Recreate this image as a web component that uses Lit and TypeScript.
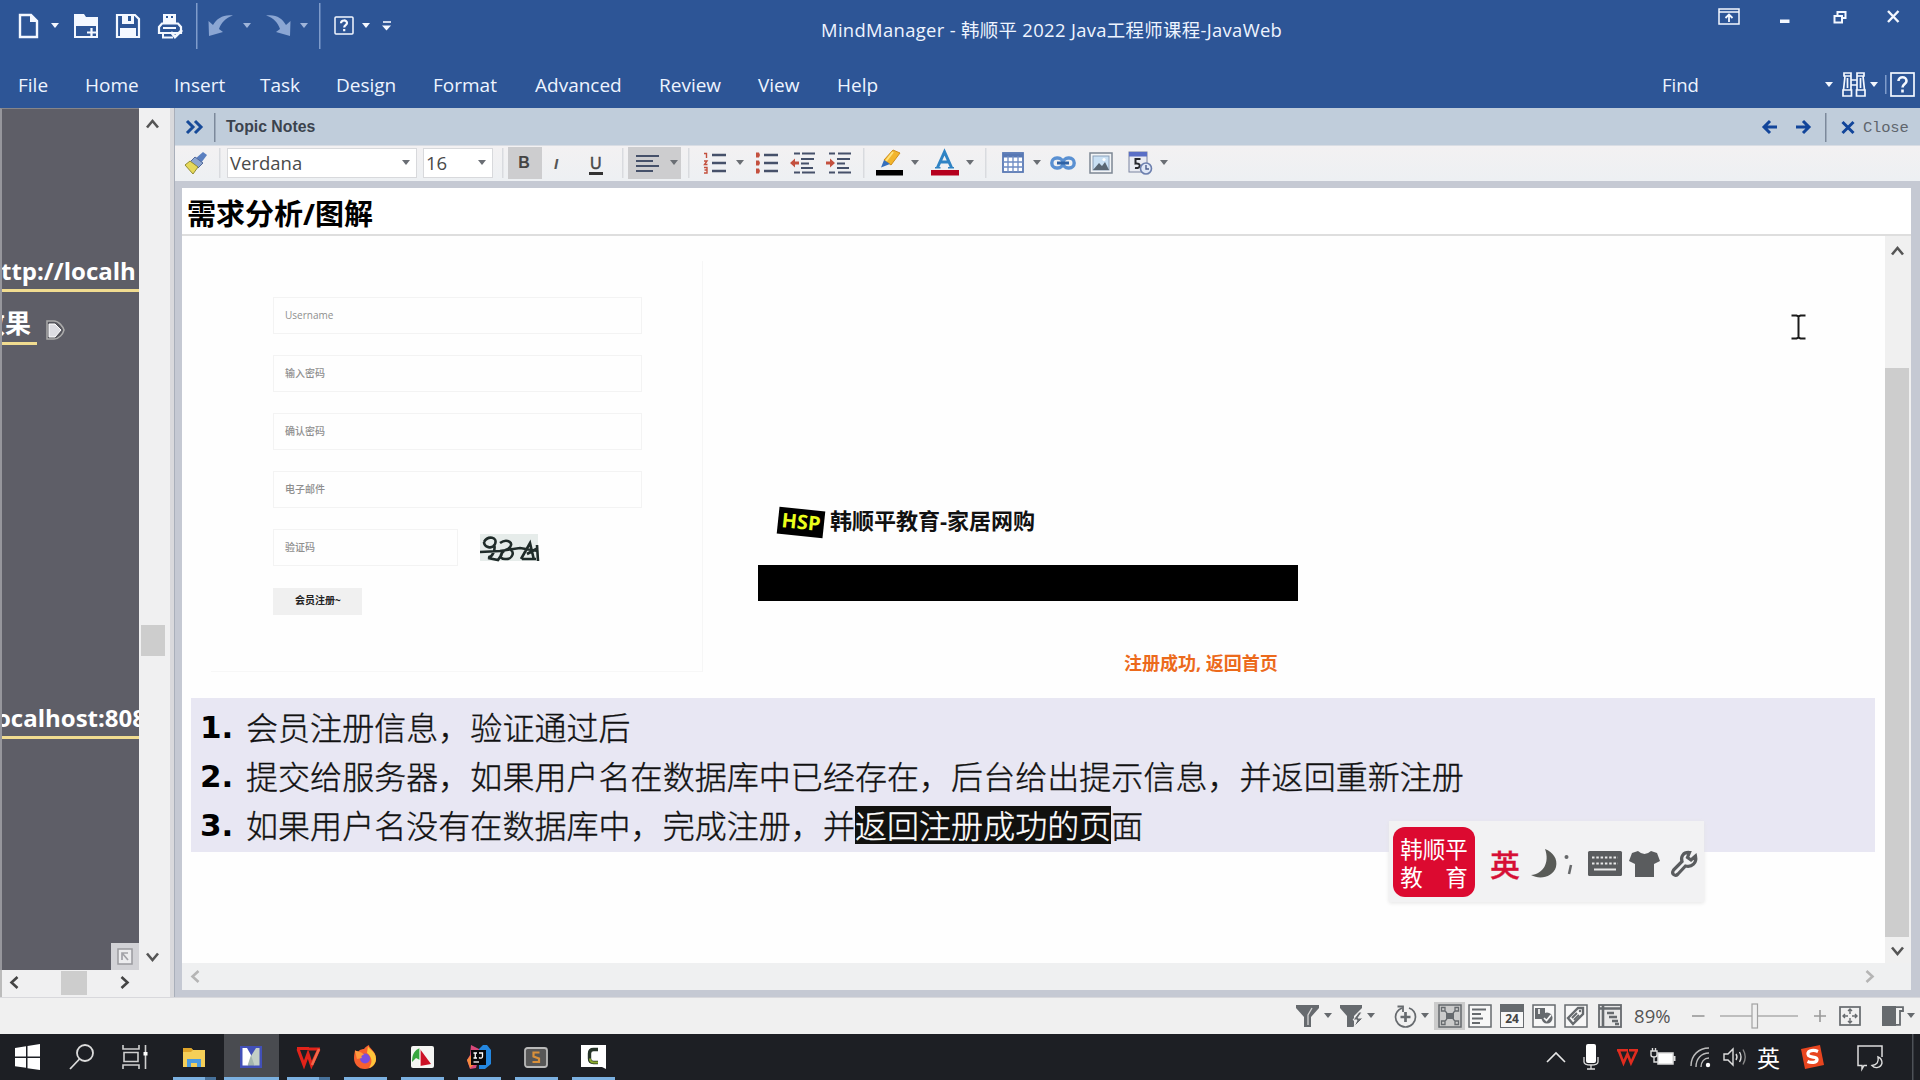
import { LitElement, html, svg, css, unsafeCSS, TemplateResult } from "lit";
import { customElement } from "lit/decorators.js";

/** Grid tracks from the left edge of every item; the last item takes the rest. */
const track = (...lefts: number[]) =>
  unsafeCSS(
    `padding-left:${lefts[0]}px;grid-template-columns:${lefts
      .slice(1)
      .map((x, i) => `${x - lefts[i]}px`)
      .join(" ")} auto`
  );

const icon = (w: number, h: number, body: unknown) =>
  html`<svg class="icon" width=${w} height=${h} viewBox="0 0 ${w} ${h}" fill="none">${body}</svg>`;

const caret = (color: string) => icon(8, 5, svg`<path d="M0 0H8L4 5Z" fill=${color} />`);
const line = (h: number, color: string) => icon(2, h, svg`<rect width="1.5" height=${h} fill=${color} />`);
const chev = (dir: "up" | "down" | "left" | "right", color: string) => {
  const d = { up: "M2 10.500L7.500 4L13 10.500", down: "M2 4.500L7.500 11L13 4.500", left: "M10.500 2L4.500 7.500L10.500 13", right: "M4.500 2L10.500 7.500L4.500 13" }[dir];
  return icon(15, 15, svg`<path d=${d} stroke=${color} stroke-width="2.600" />`);
};

const W = "#f4f8ff";
const G = "#666a6e";

const quick: TemplateResult[] = [
  icon(21, 26, svg`<path d="M2 2H13L19 8V24H2Z" stroke=${W} stroke-width="2.400"/><path d="M12 1V9H20" fill=${W}/>`),
  caret(W),
  icon(26, 26, svg`<path d="M1 1H11L13 4H25V13H1Z" fill=${W}/><path d="M2 10V24H24V10" stroke=${W} stroke-width="2"/><path d="M14 19.500H23M18.500 15V24" stroke=${W} stroke-width="2.200"/>`),
  icon(26, 26, svg`<path d="M2 2H20L24 6V24H2Z" stroke=${W} stroke-width="2.200"/><path d="M7 1H19V11H7Z" fill=${W}/><path d="M13 3H16V8H13Z" fill="#2b5797"/><path d="M5 15H21V24H5Z" fill=${W}/>`),
  icon(26, 26, svg`<path d="M6 1H19V10H6Z" fill=${W}/><path d="M9 3H11V5H9ZM14 3H16V5H14ZM9 7H16" fill="#2b5797"/><path d="M5 10.500H21L24 14V20H2V14Z" stroke=${W} stroke-width="2.200"/><path d="M6 15H19M6 20V24.500H16" stroke=${W} stroke-width="2"/><path d="M14 19L18 24L25 17" stroke=${W} stroke-width="2.800"/>`),
  line(46, "#7f9ccb"),
  icon(26, 23, svg`<path d="M1 22L0.500 7L5 11C9 4 16 0 25 1.500C17.500 4 13 9 11 15L15 18Z" fill="#8ba6d3"/>`),
  caret("#9fb5da"),
  icon(26, 23, svg`<path d="M24 22L24.500 7L20 11C16 4 10 0 0 1.500C8 4 12 9 14 15L10 18Z" fill="#8ba6d3"/>`),
  caret("#9fb5da"),
  line(46, "#7f9ccb"),
  icon(20, 19, svg`<rect x="1" y="1" width="18" height="17" rx="1" stroke=${W} stroke-width="1.500"/><path d="M7 7.200C7 3.600 13 3.600 13 7C13 9.200 10.200 9 10.200 11.500M10.200 13V15.200" stroke=${W} stroke-width="2.200"/>`),
  caret(W),
  icon(9, 10, svg`<path d="M1 1H9" stroke=${W} stroke-width="1.600"/><path d="M0 4.500H9L4.500 9.500Z" fill=${W}/>`),
];

const windowButtons = [
  icon(22, 17, svg`<rect x="1" y="1" width="20" height="15" stroke=${W} stroke-width="1.500"/><path d="M1 4H21" stroke=${W} stroke-width="1.500"/><path d="M11 14V7M7.500 10L11 6.500L14.500 10" stroke=${W} stroke-width="1.800"/>`),
  icon(10, 14, svg`<rect y="9.500" width="9.500" height="3.500" fill=${W}/>`),
  icon(14, 14, svg`<path d="M4.500 5V2H12.500V8H9.500" stroke=${W} stroke-width="2"/><rect x="1.500" y="6" width="7.500" height="6.500" stroke=${W} stroke-width="2"/>`),
  icon(13, 13, svg`<path d="M1 1L11.500 12M11.500 1L1 12" stroke=${W} stroke-width="2.400"/>`),
];

const findTools = [
  html`<span>Find</span>`,
  caret(W),
  icon(24, 25, svg`<path d="M2 1H9V4H2ZM15 1H22V4H15ZM3 4L1.500 18M9 4V18M15 4V18M21 4L22.500 18M1 18H9.500V24H1ZM14.500 18H23V24H14.500ZM9 8H15M9 13H15M5.500 6V16M18.500 6V16" stroke=${W} stroke-width="1.700"/>`),
  caret(W),
  line(19, "#7f9ccb"),
  icon(25, 25, svg`<rect x="1" y="1" width="23" height="23" stroke=${W} stroke-width="1.700"/><path d="M8.500 9C8.500 4 16.500 4 16.500 9C16.500 12 12.500 12 12.500 15.500M12.500 17.500V20.500" stroke=${W} stroke-width="2.600"/>`),
];

const N = "#46516a";
const R = "#c4503e";
const K = "#6a6e74";

const toolbar = [
  icon(24, 24, svg`<path d="M19 1L23 4L17 12L11 8Z" fill="#5a7fc0"/><path d="M11 6L19 12L14 17L6 11Z" fill="#8da6cf" stroke="#53699a"/><path d="M6 10L14 16L9 23L1 14Z" fill="#e6d95a" stroke="#928c35"/>`),
  line(30, "#d9dbdf"),
  html`<div class="select"><span>Verdana</span>${caret(K)}</div>`,
  html`<div class="select size"><span>16</span>${caret(K)}</div>`,
  line(30, "#d9dbdf"),
  html`<div class="on"><b>B</b></div>`,
  html`<i class="ital">I</i>`,
  html`<b class="under">U</b>`,
  line(30, "#d9dbdf"),
  html`<div class="on align">${icon(24, 18, svg`<path d="M0 2H23M0 7H17M0 12H23M0 17H17" stroke=${N} stroke-width="1.900"/>`)}${caret(K)}</div>`,
  line(30, "#d9dbdf"),
  icon(24, 22, svg`<path d="M1 1.500H3.500V6M1 9H4L1.500 12.500H4.500M1 15.500H4V21H1M1.500 18H4" stroke=${R} stroke-width="1.400"/><path d="M9 3H23M9 11H23M9 19H23" stroke=${N} stroke-width="2.300"/>`),
  caret(K),
  icon(24, 22, svg`<path d="M1 0.500H4L5 3L4 5.500H1ZM1 8.500H4L5 11L4 13.500H1ZM1 16.500H4L5 19L4 21.500H1Z" fill=${R}/><path d="M9 3H23M9 11H23M9 19H23" stroke=${N} stroke-width="2.300"/>`),
  icon(25, 22, svg`<path d="M4 1.500H10M12 1.500H25M11 7H24M11 11.500H19M11 16H23M4 20.500H10M12 20.500H25" stroke=${N} stroke-width="2.200"/><path d="M0 11L5 6.500V9.500H9V12.500H5V15.500Z" fill=${R}/>`),
  icon(25, 22, svg`<path d="M3 1.500H9M12 1.500H25M11 7H24M11 11.500H19M11 16H23M3 20.500H9M12 20.500H25" stroke=${N} stroke-width="2.200"/><path d="M9 11L4 6.500V9.500H0V12.500H4V15.500Z" fill=${R}/>`),
  line(30, "#d9dbdf"),
  icon(28, 27, svg`<path d="M17 1L24 4L15 16L8 11Z" fill="#f3b52c" stroke="#cf8e1b"/><path d="M17 3L10 12" stroke="#ffe27a" stroke-width="2"/><path d="M8 11L14 15L5 18.500Z" fill="#3670be"/><rect y="21" width="27" height="5.500" fill="#000"/>`),
  caret(K),
  icon(28, 27, svg`<path d="M6.500 18.500L13.500 3L20.500 18.500M9 13H18" stroke="#2f83c4" stroke-width="3"/><path d="M4 18.700H9.500M17 18.700H23" stroke="#2f83c4" stroke-width="1.600"/><rect y="21" width="28" height="5.500" fill="#b5001e"/>`),
  caret(K),
  line(30, "#d9dbdf"),
  icon(22, 21, svg`<rect x="1" y="1" width="20" height="19" fill="#fff" stroke="#5878b4" stroke-width="1.800"/><path d="M1 3.500H21" stroke="#5878b4" stroke-width="4"/><path d="M1 10H21M1 15H21M6 4V20M11 4V20M16 4V20" stroke="#6e8cc4" stroke-width="1.300"/>`),
  caret(K),
  icon(26, 14, svg`<rect x="1.800" y="2" width="11" height="10" rx="5" stroke="#5a90d2" stroke-width="3.400"/><rect x="13.200" y="2" width="11" height="10" rx="5" stroke="#5a90d2" stroke-width="3.400"/><path d="M7 7H19" stroke="#2f62a5" stroke-width="3"/>`),
  icon(24, 22, svg`<rect x="1" y="1" width="22" height="20" fill="#f2f4f6" stroke="#7d8794" stroke-width="1.500"/><rect x="4" y="4" width="16" height="14" fill="#c9e0f4" stroke="#8ca0b8"/><path d="M4 18L10 11L13 14L16 10L20 18Z" fill="#5a6774"/><circle cx="15" cy="7.500" r="1.600" fill="#fff"/>`),
  icon(25, 24, svg`<rect x="1" y="1" width="18" height="20" fill="#e9ebf2" stroke="#7b84a0"/><rect x="1" y="1" width="18" height="4.500" fill="#5a6fc6"/><path d="M12.500 8H7.500V12.500C13 11.500 13.500 18 7 17" stroke="#26282e" stroke-width="2"/><circle cx="18" cy="17.500" r="5.500" fill="#dfe7f6" stroke="#6c7fae" stroke-width="1.600"/><path d="M18 14V18H21" stroke="#4b5d8c" stroke-width="1.400"/>`),
  caret(K),
];

const frame = (inner: unknown) => icon(24, 24, svg`<rect x="1" y="1" width="22" height="22" fill="#f7f7f7" stroke=${G} stroke-width="1.500"/>${inner}`);

const status = [
  icon(23, 22, svg`<path d="M0 0H23V3L15 12V22H8V12L0 3Z" fill=${G}/><path d="M16 3L12 10V20" stroke="#d4d4d4" stroke-width="1.300"/>`),
  caret(G),
  icon(23, 22, svg`<path d="M0 0H22V3L14 11V22H7V11L0 3Z" fill=${G}/><path d="M19 7L13 15H17L14 22L23 13H18L22 7Z" fill=${G} stroke="#eee" stroke-width="1"/>`),
  caret(G),
  icon(24, 24, svg`<path d="M8 4C3.500 6 1.500 9.500 1.500 13C1.500 18 5.500 23 11.500 23C17.500 23 21.500 18 21.500 13C21.500 9 19 5.500 15 4" stroke=${G} stroke-width="1.700"/><path d="M11.500 8V18M6.500 13H16.500" stroke=${G} stroke-width="2.700"/><path d="M3.500 2.500H9V8" stroke=${G} stroke-width="1.800"/>`),
  caret(G),
  html`<div class="picked">${icon(24, 24, svg`<rect x="1" y="1" width="22" height="22" stroke=${G} stroke-width="1.500"/><rect x="8" y="9" width="8" height="6" fill=${G}/><path d="M3.500 3.500H7V7H3.500ZM17 3.500H20.500V7H17ZM3.500 17H7V20.500H3.500ZM17 17H20.500V20.500H17ZM7 7L9 9M17 7L15 9M7 17L9 15M17 17L15 15" stroke=${G} stroke-width="1.300"/>`)}</div>`,
  frame(svg`<path d="M4 5.500H18M4 10H13M4 14.500H15M4 19H12" stroke=${G} stroke-width="1.800"/>`),
  html`<div class="cal">24</div>`,
  frame(svg`<path d="M3 4H13V12H10V15H3Z" fill=${G}/><circle cx="15" cy="14" r="5.500" fill=${G}/><path d="M12 14L14.500 16.500L19 11M7 5V10" stroke="#f7f7f7" stroke-width="1.700"/>`),
  frame(svg`<path d="M4 14L14 4H19V10L9 20Z" stroke=${G} stroke-width="2.400"/><path d="M8 14L13 9M10 16L15 11" stroke=${G} stroke-width="2"/><circle cx="16" cy="7" r="1.200" fill=${G}/>`),
  icon(24, 24, svg`<rect x="1" y="1" width="22" height="22" fill="#e8e8e8" stroke=${G} stroke-width="1.800"/><path d="M1 4.500H23M5 1V23" stroke=${G} stroke-width="2.600"/><path d="M9 9H16M11 13H19M14 17H20M17 20H21" stroke=${G} stroke-width="2.500"/>`),
  html`<span class="pct">89%</span>`,
  icon(13, 12, svg`<path d="M0 6H12.500" stroke="#999" stroke-width="1.600"/>`),
  icon(78, 26, svg`<path d="M0 13H78" stroke="#adadad" stroke-width="1.500"/><rect x="32" y="1" width="5.500" height="24" fill="#f0f0f0" stroke="#a2a2a2" stroke-width="1.200"/>`),
  icon(12, 12, svg`<path d="M0 6H12M6 0V12" stroke="#999" stroke-width="1.600"/>`),
  icon(22, 20, svg`<rect x="1" y="1" width="20" height="18" stroke=${G} stroke-width="1.700"/><path d="M11 3V8M11 12V17M4 10H9M13 10H18M9 5L11 3L13 5M9 15L11 17L13 15M6 8L4 10L6 12M16 8L18 10L16 12" stroke=${G} stroke-width="1.400"/>`),
  icon(22, 20, svg`<rect width="14" height="20" fill=${G}/><path d="M13 1.200H21V5H18V18.800H13" stroke=${G} stroke-width="1.800"/>`),
  caret(G),
];

const apps: { art: TemplateResult; active?: boolean; split?: boolean }[] = [
  { split: true, art: icon(24, 22, svg`<path d="M1 2H9L11 4H23V21H1Z" fill="#f5cf58"/><path d="M1 2H9L11 4L9 6H1Z" fill="#e0a52a"/><path d="M5 21V13H19V21H15V17H9V21Z" fill="#4c9be0"/>`) },
  { active: true, art: icon(24, 24, svg`<rect x="1" y="1" width="22" height="22" fill="#4250b8"/><path d="M3.500 3H8L12 10V15L9 20.500H3.500Z" fill="#fff"/><path d="M20.500 3H17L12 11V14L15 20.500H20.500Z" fill="#c3cfc6"/><path d="M12 10L8.500 20.500H15.500Z" fill="#a3b5ae"/>`) },
  { split: true, art: icon(25, 20, svg`<path d="M1 1.500H13M2 2L8 18L12 7L15.500 18L23 2M13 2H24" stroke="#e2231a" stroke-width="3.200"/><path d="M16 18L23 2" stroke="#f26a4b" stroke-width="2.500"/>`) },
  { art: icon(24, 24, svg`<path d="M2 5L5 7C7 4 10 4 11 4C12 2 14 1 16 0C16 4 23 5 23 14C23 20 18 24 12 24C5 24 1 19 1 13C1 9 2 7 2 5Z" fill="#f7602f"/><path d="M15 1C16 5 23 6 23 14C23 18 20 22 16 23C20 17 19 12 14 8Z" fill="#fdc53b"/><circle cx="12" cy="13.500" r="5" fill="#7a4de0"/><path d="M2 6C6 6 10 8 11 10C8 10 8 12 9 13L4 14Z" fill="#ff9a3d"/>`) },
  { art: icon(23, 22, svg`<rect width="23" height="22" rx="2" fill="#f4f5f3"/><path d="M1 16C1 9 3 5 7 3L9 2V14L5 12Z" fill="#36a73f"/><path d="M9 3L20 18L9 20Z" fill="#cc1126"/><path d="M9 2V20" stroke="#fff" stroke-width="1.200"/>`) },
  { art: icon(24, 24, svg`<path d="M4 0L14 5L9 23L3 24L0 15L3 10Z" fill="#d8487a"/><path d="M0 15L4 10L9 18L3 23Z" fill="#f58b3c"/><path d="M12 4L16 0H20L24 5V19L18 24H12Z" fill="#2487e0"/><rect x="4" y="5" width="15" height="15" fill="#08080a"/><path d="M6.500 8H10M8.250 8V13M6.500 13H10M12 8H15.500V11.500C15.500 13.500 13 13.500 12 12.500" stroke="#fff" stroke-width="1.300"/><path d="M6.500 17H12" stroke="#fff" stroke-width="1.300"/>`) },
  { art: icon(24, 21, svg`<rect x="1" y="1" width="22" height="19" rx="2.500" fill="#575757" stroke="#b9b9b9" stroke-width="1.800"/><path d="M15.500 5.500H9.500V9.500L15 11.500V15H8.500" stroke="#d9903a" stroke-width="2.200"/>`) },
  { art: icon(25, 24, svg`<path d="M0 0H25V24L21 22H0Z" fill="#fff"/><path d="M17 4.500H12.500Q8.500 4.500 8.500 8.500V13.500Q8.500 17.500 12.500 17.500H17" stroke="#27352a" stroke-width="3.400"/><path d="M9 13.500Q9 17.500 13 17.500H17" stroke="#8bab2d" stroke-width="2"/>`) },
];

const tray = [
  icon(20, 11, svg`<path d="M1 10L10 1L19 10" stroke="#e6e6e6" stroke-width="1.600"/>`),
  icon(16, 26, svg`<rect x="3" width="10" height="19" rx="2" fill="#fff"/><path d="M1 13V18Q1 21 8 21Q15 21 15 18V13M8 21V25M4 25H12" stroke="#ddd" stroke-width="1.300"/>`),
  icon(21, 17, svg`<path d="M0 1.200H11M1.500 1L6.500 14L10.500 5L14 14L20 1M12 1.200H21" stroke="#e02c1f" stroke-width="2.600"/>`),
  icon(26, 20, svg`<rect x="8" y="6" width="15" height="11" fill="#fff" stroke="#ddd" stroke-width="1.500"/><path d="M24.500 9V14" stroke="#ddd" stroke-width="2"/><path d="M1 4H7V8Q7 10 4 10Q1 10 1 8ZM2.500 1V4M5.500 1V4M4 10V15H8" stroke="#ddd" stroke-width="1.400"/>`),
  icon(21, 22, svg`<path d="M1 20C1 9 9 2 19 2M6 21C6 13 11 7 19 7M11 21C11 16 14 12 19 12" stroke="#bcbcbc" stroke-width="1.400"/><circle cx="18" cy="19" r="2.200" fill="#fff"/>`),
  icon(24, 20, svg`<path d="M1 7H5L10 2V18L5 13H1Z" stroke="#ddd" stroke-width="1.400"/><path d="M13 7Q15 10 13 13M16.500 5Q19.500 10 16.500 15" stroke="#ddd" stroke-width="1.400"/><path d="M20 2.500Q24.500 10 20 17.500" stroke="#888" stroke-width="1.400"/>`),
  html`<span class="lang">英</span>`,
  icon(25, 24, svg`<path d="M1 4L20 0L24 20L5 24Z" fill="#e8451f"/><path d="M18 6.500C12 4 6 6.500 8.500 10.500C10.500 13 17 11 17 14.500C17 18 11 18 7.500 16.500" stroke="#fff" stroke-width="3.300"/>`),
  icon(26, 25, svg`<path d="M10 20.500H7L5 24V20.500H1V1H25V12" stroke="#ddd" stroke-width="1.500"/><path d="M21 12C22 17 20 20 15 20.500C18 24 24 23 25 18C25 15 23.500 13 21 12Z" stroke="#ddd" stroke-width="1.400"/>`),
  line(46, "#4d5157"),
];

@customElement("app-root")
export class AppRoot extends LitElement {
  static styles = css`
    :host { display: grid; grid-template-rows: 108px 889px 37px 46px; width: 1920px; height: 1080px; overflow: hidden; background: #f0f0f0; font-family: "Open Sans", "Noto Sans CJK SC", sans-serif; box-sizing: border-box; position: relative; }
    * { box-sizing: border-box; }
    .icon { display: block; flex: none; overflow: visible; }
    .tracks { display: grid; align-items: center; justify-items: start; white-space: nowrap; }

    .header { display: grid; grid-template-rows: 58px 50px; background: #2d5596; color: #eef4ff; }
    .titlebar { display: grid; grid-template-columns: 821px 880px 219px; }
    .quick { height: 51px; ${track(18, 51, 73, 115, 157, 196, 208, 243, 266, 300, 319, 334, 362, 382)}; }
    .title { font-size: 18.400px; letter-spacing: 0.340px; line-height: 58px; padding-top: 1px; white-space: nowrap; }
    .window { height: 33px; ${track(17, 79, 132, 186)}; }
    .menubar { display: grid; grid-template-columns: 1662px 258px; font-size: 19px; }
    .menu { height: 54px; ${track(18, 85, 174, 260, 336, 433, 535, 659, 758, 837)}; }
    .find { height: 52px; font-size: 18.5px; ${track(0, 163, 180, 208, 223, 228)}; }

    .main { display: grid; grid-template-columns: 174px 1746px; }
    .map { display: grid; grid-template-columns: 139px 31px 4px; grid-template-rows: 862px 27px; background: #f0f0f1; }
    .canvas { background: #5e5e67; border-left: 2px solid #96969c; border-top: 1px solid #85858a; overflow: hidden; position: relative; color: #fff; font-weight: 700; font-size: 24px; white-space: nowrap; }
    .topic { position: absolute; height: 41px; line-height: 39px; border-bottom: 3px solid #f1dc90; }
    .t1 { left: -1px; top: 142px; width: 139px; }
    .t2 { left: -23px; top: 195px; width: 58px; font-size: 26px; }
    .t3 { left: -6px; top: 589px; width: 150px; }
    .note { position: absolute; left: 41px; top: 210px; }
    .corner { position: absolute; right: 0; bottom: 0; width: 28px; height: 27px; display: grid; place-items: center; background: #d2d2d6; }
    .vbar { display: flex; flex-direction: column; align-items: center; padding: 9px 6px 6px 0; position: relative; left: 1px; }
    .thumb { background: #cdcdcd; flex: none; }
    .map .vbar .thumb { width: 24px; height: 31px; margin: 493px 0 auto; }
    .edge { grid-row: 1 / 3; grid-column: 3; background: #d9d9dc; }
    .hbar { grid-row: 2; grid-column: 1; display: flex; align-items: center; padding: 0 7px 2px 5px; border-left: 2px solid #bbb; }
    .hbar .thumb { width: 26px; height: 24px; margin: 0 auto 0 39px; }

    .panel { display: grid; grid-template-rows: 38px 35px 7px 802px 7px; background: #c5c9d3; border-left: 1px solid #a9afba; }
    .topicbar { background: #c0cddb; border-bottom: 1px solid #d9dde4; font-size: 16px; color: #3b434e; padding-top: 1px; ${track(11, 39, 51, 1587, 1620, 1650, 1666, 1688)}; }
    .topicbar b { font-family: "Liberation Sans", sans-serif; font-size: 15.800px; }
    .topicbar .close { font-family: "Liberation Mono", monospace; font-size: 15.500px; color: #5f656d; line-height: 20px; padding-top: 2px; letter-spacing: -0.200px; }
    .tools { background: linear-gradient(#f3f1f2, #edf0f3); color: #4a4a4a; padding-bottom: 2px; ${track(9, 44, 52, 248, 327, 333, 379, 414, 447, 453, 513, 528, 561, 580, 615, 651, 688, 701, 736, 756, 791, 810, 827, 858, 875, 914, 953, 985)}; }
    .select { display: flex; align-items: center; justify-content: space-between; width: 190px; height: 30px; background: #fff; border: 1px solid #d8d9dc; padding: 0 6px 1px 2px; font-size: 18.500px; }
    .select.size { width: 70px; }
    .on { display: grid; place-items: center; width: 34px; height: 32px; background: #cdcdcf; font-family: "Liberation Sans", sans-serif; font-size: 16px; color: #444; padding: 1px 2px 0 0; }
    .on.align { width: 53px; display: flex; justify-content: space-between; padding: 0 3px 0 8px; }
    .ital { font-family: "Liberation Sans", sans-serif; font-size: 15px; font-weight: 700; color: #555; padding-top: 2px; }
    .under { font-family: "Liberation Sans", sans-serif; font-size: 16px; font-weight: 400; -webkit-text-stroke: 0.4px #444; line-height: 17px; border-bottom: 3px solid #333; padding: 0 1px; margin-top: 5px; }

    .editor { margin-left: 7px; width: 1729px; background: #fff; display: grid; grid-template-rows: 48px 727px 27px; }
    .heading { border-bottom: 2px solid #dedede; padding-left: 5px; font-size: 29px; font-weight: 700; line-height: 52px; color: #000; }
    .scroll { display: grid; grid-template-columns: 1703px 26px; }
    .doc { padding: 0 10px 0 9px; background: #fefefe; }
    .shots { display: grid; grid-template-columns: 510px 1fr; height: 462px; }
    .form { margin: 25px 0 0 20px; width: 492px; height: 411px; border-right: 1px solid #f6f6f6; border-bottom: 1px solid #f7f7f7; padding: 36px 0 0 62px; font-size: 10px; color: #8e8e8e; }
    .field { width: 369px; height: 37px; border: 1px solid #f3f3f3; line-height: 35px; padding-left: 11px; margin-bottom: 21px; font-weight: 500; }
    .half { display: flex; gap: 22px; height: 37px; align-items: center; margin-bottom: 22px; }
    .half .field { width: 185px; margin: 0; }
    .submit { width: 89px; height: 27px; background: #f0f0f0; color: #222; font-weight: 700; line-height: 25px; padding-left: 22px; }
    .success { padding: 270px 0 0 57px; }
    .brand { display: flex; align-items: center; height: 32px; margin-left: 20px; font-weight: 700; font-size: 22px; color: #111; white-space: nowrap; }
    .name { line-height: 28px; padding-bottom: 5px; }
    .hsp { width: 46px; height: 27px; background: #000; color: #eaff1c; transform: rotate(6deg); line-height: 26px; text-align: center; font-size: 20px; margin-right: 6px; }
    .blackbar { width: 540px; height: 36px; background: #000; margin-top: 27px; }
    .done { margin: 48px 0 0 366px; font-size: 18px; font-weight: 700; line-height: 28px; color: #ec6a1c; white-space: nowrap; }
    .steps { background: #e8e7f3; height: 154px; padding: 4px 0 0 9px; font-family: "Noto Sans CJK SC", sans-serif; font-size: 32px; letter-spacing: 0.050px; color: #111; white-space: nowrap; }
    .step { display: grid; grid-template-columns: 46px auto; height: 49px; line-height: 49px; font-weight: 300; -webkit-text-stroke: 0.350px currentColor; }
    .step b { font-family: "DejaVu Sans", sans-serif; font-weight: 700; font-size: 31px; color: #000; padding-top: 1px; letter-spacing: 0; -webkit-text-stroke: 0; }
    .step mark { display: inline-block; background: #11110f; color: #fff; height: 38px; line-height: 36px; }
    .dbar { display: flex; flex-direction: column; align-items: center; background: #f0f0f0; padding: 8px 2px 6px 0; }
    .dbar .thumb { width: 24px; height: 569px; margin: 109px 0 6px; }
    .foot { display: flex; justify-content: space-between; align-items: center; background: #eff0f1; padding: 0 34px 0 6px; }

    .status { border-top: 1px solid #d8d8dc; color: #555; background: #f0f0f0; padding-bottom: 1px; ${track(1296, 1324, 1340, 1367, 1394, 1421, 1434, 1468, 1500, 1532, 1564, 1598, 1634, 1692, 1720, 1814, 1839, 1882, 1907)}; }
    .picked { width: 31px; height: 28px; background: #cbcbcb; display: grid; place-items: center; }
    .cal { width: 24px; height: 24px; border: 1.500px solid #666a6e; border-top-width: 8px; background: #f7f7f7; font: 700 12px/14px "Open Sans", sans-serif; text-align: center; color: #444; }
    .pct { font-size: 18.500px; letter-spacing: 0.100px; }

    .taskbar { display: grid; grid-template-columns: 173px 1373px 374px; background: #1d1f24; }
    .system { ${track(15, 69, 122)}; }
    .apps { display: grid; grid-template-columns: 43px 71px repeat(6, 57px); }
    .app { display: grid; justify-items: center; align-items: center; width: 43px; height: 46px; border-bottom: 3px solid #7bb0e0; padding: 3px 1px 0 0; }
    .app.split { border-image: linear-gradient(90deg, #7bb0e0 74%, #47719a 74%) 1; border-style: solid; border-width: 0 0 3px; }
    .app.active { width: 55px; margin-left: 8px; background: #494b50; }
    .tray { ${track(0, 37, 71, 104, 144, 177, 211, 254, 311, 366)}; }
    .lang { font-size: 23px; color: #fff; }

    .ime { position: absolute; left: 1389px; top: 821px; width: 315px; height: 81px; background: #f2f2f3; box-shadow: 0 1px 4px #e4e4e4; color: #d60f35; ${track(4, 101, 142, 175, 199, 240, 282)}; }
    .ime > .icon { margin-top: 4px; }
    .seal { width: 82px; height: 70px; border-radius: 12px; background: #dc0a30; color: #fff; display: grid; grid-template-rows: 28px 28px; padding-top: 9px; justify-content: center; font-size: 22.500px; line-height: 27px; white-space: pre; }
    .ime strong { font-size: 30px; font-weight: 500; -webkit-text-stroke: 0.300px #d60f35; padding-top: 2px; }
    .cursor { position: absolute; left: 1791px; top: 314px; }
  `;

  private field(label: string) {
    return html`<div class="field">${label}</div>`;
  }

  render() {
    return html`
      <div class="header">
        <div class="titlebar">
          <div class="quick tracks">${quick}</div>
          <div class="title">MindManager - 韩顺平 2022 Java工程师课程-JavaWeb</div>
          <div class="window tracks">${windowButtons}</div>
        </div>
        <div class="menubar">
          <div class="menu tracks">
            ${["File", "Home", "Insert", "Task", "Design", "Format", "Advanced", "Review", "View", "Help"].map((m) => html`<span>${m}</span>`)}
          </div>
          <div class="find tracks">${findTools}</div>
        </div>
      </div>

      <div class="main">
        <div class="map">
          <div class="canvas">
            <div class="topic t1">ttp://localh</div>
            <div class="topic t2">效果</div>
            <div class="topic t3">ocalhost:808</div>
            <div class="note">${icon(22, 22, svg`<path d="M4 2H11C16 2 20 8 21 11C20 15 16 20 11 20H4Z" fill="#55555d" stroke="#aaa" stroke-width="1.500"/><path d="M6 5H12L18 11L12 18H6Z" fill="#dcdce2" stroke="#fff"/>`)}</div>
            <div class="corner">${icon(16, 17, svg`<rect x="1" y="1" width="14" height="15" fill="#ececee" stroke="#9a9a9f" stroke-width="1.500"/><path d="M5 12V5H11M5.500 5.500L11 12" stroke="#a2a2a8" stroke-width="1.700"/>`)}</div>
          </div>
          <div class="vbar">${chev("up", "#555")}<div class="thumb"></div>${chev("down", "#555")}</div>
          <div class="hbar">${chev("left", "#444")}<div class="thumb"></div>${chev("right", "#444")}</div>
          <div class="edge"></div>
        </div>

        <div class="panel">
          <div class="topicbar tracks">
            ${icon(17, 14, svg`<path d="M1 1L7 7L1 13M9 1L15 7L9 13" stroke="#174a98" stroke-width="3"/>`)}
            ${line(29, "#7c899b")}<b>Topic Notes</b>
            ${icon(16, 14, svg`<path d="M15 7H2M8 1L2 7L8 13" stroke="#12459a" stroke-width="3"/>`)}
            ${icon(16, 14, svg`<path d="M1 7H14M8 1L14 7L8 13" stroke="#12459a" stroke-width="3"/>`)}
            ${line(29, "#7c899b")}
            ${icon(14, 13, svg`<path d="M1.500 1L12.500 12M12.500 1L1.500 12" stroke="#12459a" stroke-width="3"/>`)}
            <span class="close">Close</span>
          </div>
          <div class="tools tracks">${toolbar}</div>
          <div></div>
          <div class="editor">
            <div class="heading">需求分析/图解</div>
            <div class="scroll">
              <div class="doc">
                <div class="shots">
                  <div class="form">
                    ${["Username", "输入密码", "确认密码", "电子邮件"].map((l) => this.field(l))}
                    <div class="half">
                      ${this.field("验证码")}
                      ${icon(60, 28, svg`<rect width="58" height="27" fill="#e6ecea"/><path d="M4 8C8 1 18 3 15 10C12 16 4 13 4 8M14 10C16 16 12 24 8 23M0 18L20 17L40 14L58 17M20 9C27 4 36 9 28 15C36 16 33 26 25 25C18 25 20 18 28 15M8 24L18 26L22 20M41 25L50 9L54 26M42 25H56M57 11L58 27M47 20L58 14" stroke="#1f2b29" stroke-width="2.600"/>`)}
                    </div>
                    <div class="submit">会员注册~</div>
                  </div>
                  <div class="success">
                    <div class="brand"><div class="hsp">HSP</div><div class="name">韩顺平教育-家居网购</div></div>
                    <div class="blackbar"></div>
                    <div class="done">注册成功, 返回首页</div>
                  </div>
                </div>
                <div class="steps">
                  <div class="step"><b>1.</b><span>会员注册信息，验证通过后</span></div>
                  <div class="step"><b>2.</b><span>提交给服务器，如果用户名在数据库中已经存在，后台给出提示信息，并返回重新注册</span></div>
                  <div class="step"><b>3.</b><span>如果用户名没有在数据库中，完成注册，并<mark>返回注册成功的页</mark>面</span></div>
                </div>
              </div>
              <div class="dbar">${chev("up", "#555")}<div class="thumb"></div>${chev("down", "#555")}</div>
            </div>
            <div class="foot">${chev("left", "#b5b5b5")}${chev("right", "#b5b5b5")}</div>
          </div>
        </div>
      </div>

      <div class="status tracks">${status}</div>

      <div class="taskbar">
        <div class="system tracks">
          ${icon(25, 26, svg`<path d="M0 4L11 2.300V12.500H0ZM12.500 2L25 0V12.500H12.500ZM0 14H11V23.800L0 22.200ZM12.500 14H25V26L12.500 24.200Z" fill="#fff"/>`)}
          ${icon(25, 26, svg`<circle cx="16" cy="9" r="8" stroke="#dcdcdc" stroke-width="1.800"/><path d="M10.500 15L1 25" stroke="#dcdcdc" stroke-width="1.800"/>`)}
          ${icon(26, 24, svg`<path d="M1 0V4H17V0M1 24V20H17V24M2 7.500H16V16.500H2ZM23.500 0V24" stroke="#cfcfcf" stroke-width="1.600"/><rect x="21.500" y="7" width="4" height="3.500" fill="#fff"/>`)}
        </div>
        <div class="apps">
          ${apps.map((a) => html`<div class="app ${a.active ? "active" : ""} ${a.split ? "split" : ""}">${a.art}</div>`)}
        </div>
        <div class="tray tracks">${tray}</div>
      </div>

      <div class="ime tracks">
        <div class="seal"><span>韩顺平</span><span>教　育</span></div>
        <strong>英</strong>
        ${icon(27, 29, svg`<path d="M14 0C22 3 27 10 25 18C22 28 9 31 0 26C12 25 19 14 14 0Z" fill="#595b57"/>`)}
        ${icon(11, 24, svg`<circle cx="2.500" cy="5" r="2" fill="#66686a"/><path d="M7 13L5 22" stroke="#66686a" stroke-width="2.500"/>`)}
        ${icon(34, 25, svg`<rect width="34" height="25" rx="1.500" fill="#5a5c5e"/><path d="M4 6.500H30M4 12.500H30" stroke="#e8e8e8" stroke-width="2.200" stroke-dasharray="2.500 1.800"/><path d="M6 18.500H28" stroke="#e8e8e8" stroke-width="2"/>`)}
        ${icon(31, 27, svg`<path d="M9 1Q15.500 7 22 1L28 3L31 11L25 14V27H6V14L0 11L3 3Z" fill="#5a5c5e"/>`)}
        ${icon(27, 27, svg`<path d="M24.500 6L20 10L16.500 7.500L18.500 2.500C12 2 9.500 7 11 11.500L2.500 20C0 24 4 27 7 24L14.500 16C21 17.500 26 13 24.500 6Z" stroke="#5a5c5e" stroke-width="3.200"/>`)}
      </div>
      <div class="cursor">${icon(15, 26, svg`<path d="M0.500 1.500H5.500L7.500 2.500L9.500 1.500H14.500M7.500 2V24M0.500 24.500H5.500L7.500 23.500L9.500 24.500H14.500" stroke="#1b1b1b" stroke-width="2"/>`)}</div>
    `;
  }
}
